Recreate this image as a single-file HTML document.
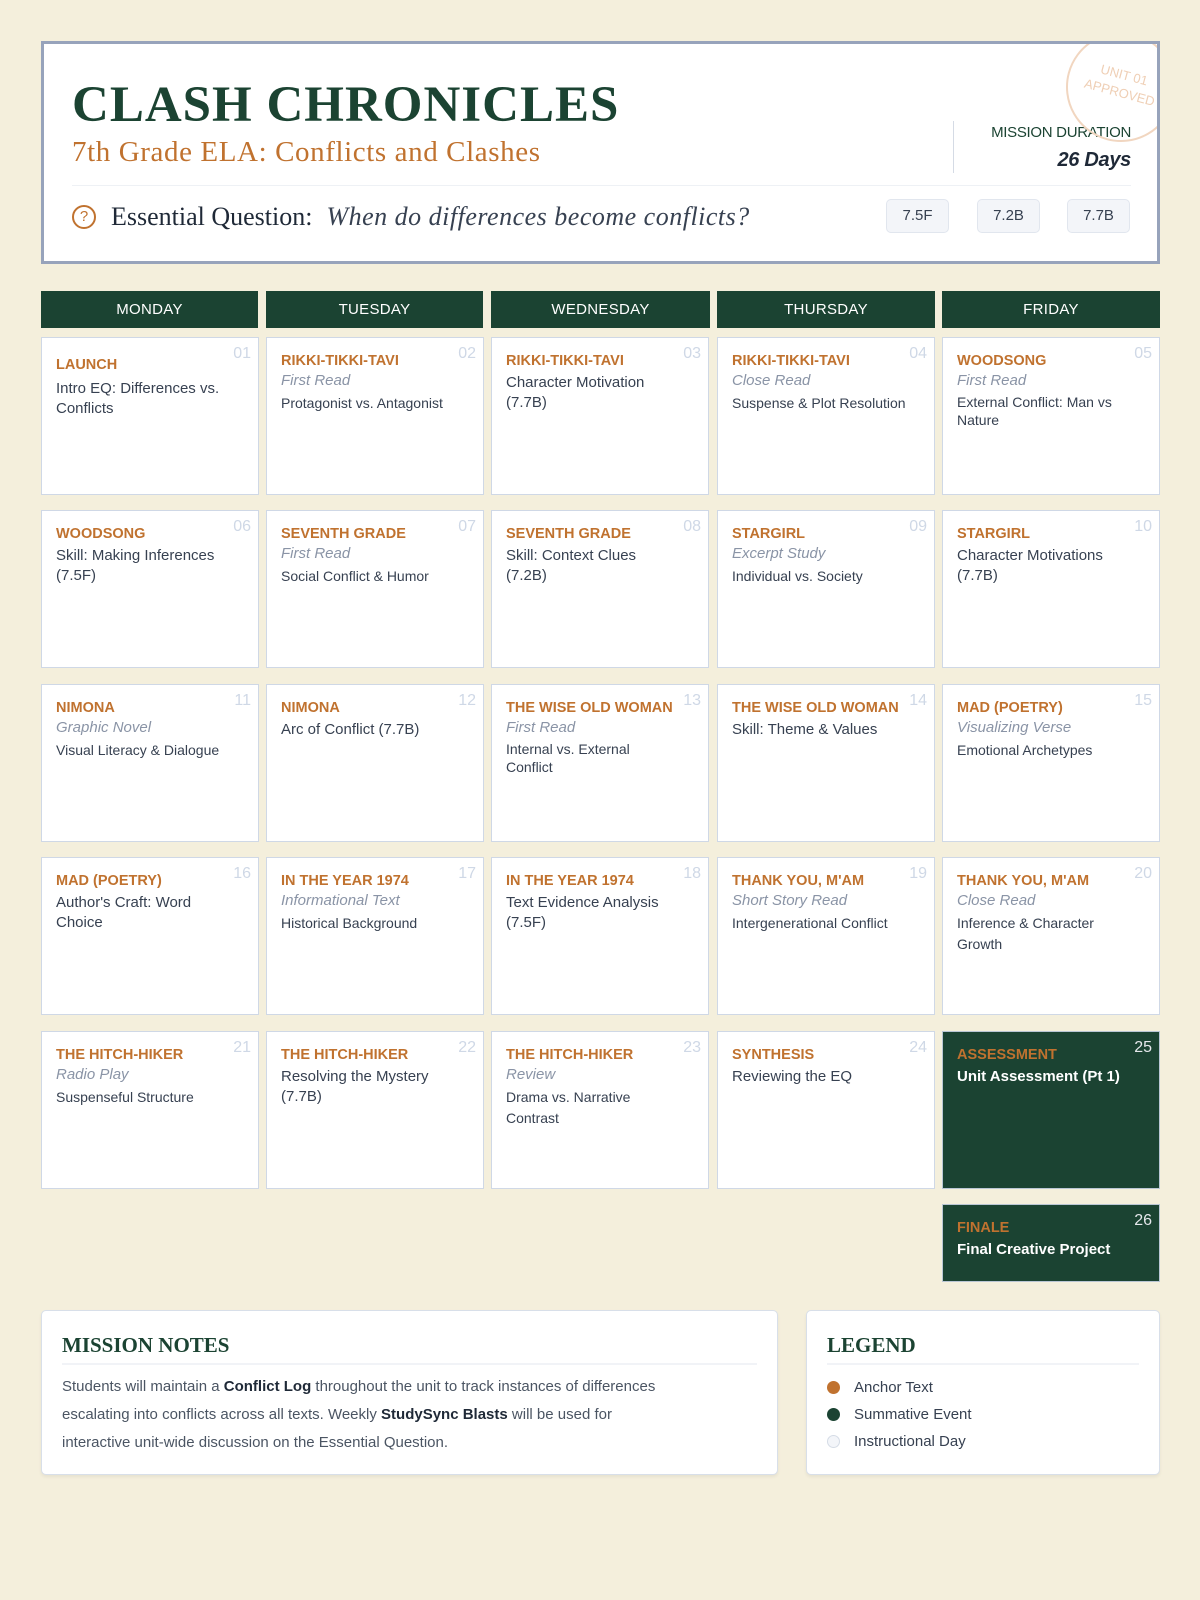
<!DOCTYPE html>
<html><head><meta charset="utf-8"><style>
*{box-sizing:border-box;margin:0;padding:0}
body{width:1200px;height:1600px;background:#f4efdc;font-family:"Liberation Sans",sans-serif;position:relative;overflow:hidden}
.hdr{position:absolute;left:41px;top:41px;width:1119px;height:223px;background:#fff;border:3px solid #97a3bb;overflow:hidden}
.title{position:absolute;left:28px;top:32px;font-family:"Liberation Serif",serif;font-weight:bold;font-size:51px;color:#1b4332;letter-spacing:1px}
.sub{position:absolute;left:28px;top:92px;font-family:"Liberation Serif",serif;font-size:29px;color:#c0722f;letter-spacing:.6px}
.vline{position:absolute;left:909px;top:77px;width:1px;height:52px;background:#d5dbe5}
.md{position:absolute;right:26px;top:80px;text-align:right;color:#1b4332;font-size:15px;letter-spacing:-.3px}
.md b{display:block;font-size:20px;font-style:italic;color:#1f2937;margin-top:8px}
.stamp{position:absolute;left:1022px;top:-12px;width:110px;height:110px;border:2px solid #f1d6c0;border-radius:50%;color:#efcfb5;font-size:13px;text-align:center;transform:rotate(15deg);padding-top:32px;line-height:18px}
.hr{position:absolute;left:28px;right:26px;top:141px;height:1px;background:#eef1f5}
.eq{position:absolute;left:28px;top:158px;font-family:"Liberation Serif",serif;font-size:26px;color:#1f2937;display:flex;align-items:center}
.eq .ic{width:24px;height:24px;border:2px solid #c0722f;border-radius:50%;color:#c0722f;font-size:15px;text-align:center;line-height:20px;margin-right:15px;font-family:"Liberation Sans",sans-serif}
.eq i{color:#374151;margin-left:14px;letter-spacing:.5px}
.tag{position:absolute;top:155px;width:63px;height:34px;background:#f3f5f9;border:1px solid #e1e6ee;border-radius:5px;font-size:15px;color:#374151;text-align:center;line-height:32px}
.day{position:absolute;top:291px;height:37px;background:#1b4332;color:#fff;font-size:15px;text-align:center;line-height:37px;letter-spacing:.3px}
.c{position:absolute;width:218px;height:158px;background:#fff;border:1.5px solid #cfd8e6;padding:12px 14px}
.c .n{position:absolute;right:7px;top:7px;font-size:16px;color:#cfd8e6}
.c .t{font-size:14.5px;font-weight:bold;color:#c0722f;margin-top:3px;white-space:nowrap}
.c .s{font-size:15px;font-style:italic;color:#8a94a6;margin-top:3px}
.c .m{font-size:15px;color:#374151;margin-top:4px;line-height:20px}
.c .d{font-size:14px;color:#374151;margin-top:4px;line-height:21px}
.c.g{background:#1b4332;border-color:#b9c6d4}
.c.g .n{color:#e5e7eb}
.c.g .m{color:#fff;font-weight:bold}
.box{position:absolute;top:1310px;height:165px;background:#fff;border:1.5px solid #d8dfe9;border-radius:5px;box-shadow:0 2px 3px rgba(0,0,0,.06)}
.box h3{font-family:"Liberation Serif",serif;font-size:21px;color:#1b4332;padding-bottom:5px;border-bottom:2px solid #f1f3f7}
.notes{left:41px;width:737px;padding:22px 20px}
.notes p{font-size:15px;color:#4b5563;line-height:28px;margin-top:8px}
.notes b{color:#1f2937}
.leg{left:806px;width:354px;padding:22px 20px}
.li{display:flex;align-items:center;font-size:15px;color:#374151;margin-top:10px}
.li:first-of-type{margin-top:14px}
.dot{width:13px;height:13px;border-radius:50%;margin-right:14px}
</style></head><body>
<div class="hdr">
<div class="title">CLASH CHRONICLES</div>
<div class="sub">7th Grade ELA: Conflicts and Clashes</div>
<div class="vline"></div>
<div class="md">MISSION DURATION<b>26 Days</b></div>
<div class="stamp">UNIT 01<br>APPROVED</div>
<div class="hr"></div>
<div class="eq"><span class="ic">?</span>Essential Question:<i>When do differences become conflicts?</i></div>
<div class="tag" style="left:842px">7.5F</div>
<div class="tag" style="left:933px">7.2B</div>
<div class="tag" style="left:1023px">7.7B</div>
</div>
<div class="day" style="left:41px;width:217px">MONDAY</div>
<div class="day" style="left:266px;width:217px">TUESDAY</div>
<div class="day" style="left:491px;width:219px">WEDNESDAY</div>
<div class="day" style="left:717px;width:218px">THURSDAY</div>
<div class="day" style="left:942px;width:218px">FRIDAY</div>

<div class="c" style="left:41px;top:337px"><span class="n">01</span><div class="t" style="margin-top:7px">LAUNCH</div><div class="m" style="margin-top:6px">Intro EQ: Differences vs.<br>Conflicts</div></div>
<div class="c" style="left:266px;top:337px"><span class="n">02</span><div class="t">RIKKI-TIKKI-TAVI</div><div class="s">First Read</div><div class="d">Protagonist vs. Antagonist</div></div>
<div class="c" style="left:491px;top:337px"><span class="n">03</span><div class="t">RIKKI-TIKKI-TAVI</div><div class="m">Character Motivation<br>(7.7B)</div></div>
<div class="c" style="left:717px;top:337px"><span class="n">04</span><div class="t">RIKKI-TIKKI-TAVI</div><div class="s">Close Read</div><div class="d">Suspense &amp; Plot Resolution</div></div>
<div class="c" style="left:942px;top:337px"><span class="n">05</span><div class="t">WOODSONG</div><div class="s">First Read</div><div class="d" style="line-height:18px">External Conflict: Man vs<br>Nature</div></div>

<div class="c" style="left:41px;top:510px"><span class="n">06</span><div class="t">WOODSONG</div><div class="m">Skill: Making Inferences<br>(7.5F)</div></div>
<div class="c" style="left:266px;top:510px"><span class="n">07</span><div class="t">SEVENTH GRADE</div><div class="s">First Read</div><div class="d">Social Conflict &amp; Humor</div></div>
<div class="c" style="left:491px;top:510px"><span class="n">08</span><div class="t">SEVENTH GRADE</div><div class="m">Skill: Context Clues<br>(7.2B)</div></div>
<div class="c" style="left:717px;top:510px"><span class="n">09</span><div class="t">STARGIRL</div><div class="s">Excerpt Study</div><div class="d">Individual vs. Society</div></div>
<div class="c" style="left:942px;top:510px"><span class="n">10</span><div class="t">STARGIRL</div><div class="m">Character Motivations<br>(7.7B)</div></div>

<div class="c" style="left:41px;top:684px"><span class="n">11</span><div class="t">NIMONA</div><div class="s">Graphic Novel</div><div class="d">Visual Literacy &amp; Dialogue</div></div>
<div class="c" style="left:266px;top:684px"><span class="n">12</span><div class="t">NIMONA</div><div class="m">Arc of Conflict (7.7B)</div></div>
<div class="c" style="left:491px;top:684px"><span class="n">13</span><div class="t">THE WISE OLD WOMAN</div><div class="s">First Read</div><div class="d" style="line-height:18px">Internal vs. External<br>Conflict</div></div>
<div class="c" style="left:717px;top:684px"><span class="n">14</span><div class="t">THE WISE OLD WOMAN</div><div class="m">Skill: Theme &amp; Values</div></div>
<div class="c" style="left:942px;top:684px"><span class="n">15</span><div class="t">MAD (POETRY)</div><div class="s">Visualizing Verse</div><div class="d">Emotional Archetypes</div></div>

<div class="c" style="left:41px;top:857px"><span class="n">16</span><div class="t">MAD (POETRY)</div><div class="m">Author's Craft: Word<br>Choice</div></div>
<div class="c" style="left:266px;top:857px"><span class="n">17</span><div class="t">IN THE YEAR 1974</div><div class="s">Informational Text</div><div class="d">Historical Background</div></div>
<div class="c" style="left:491px;top:857px"><span class="n">18</span><div class="t">IN THE YEAR 1974</div><div class="m">Text Evidence Analysis<br>(7.5F)</div></div>
<div class="c" style="left:717px;top:857px"><span class="n">19</span><div class="t">THANK YOU, M'AM</div><div class="s">Short Story Read</div><div class="d">Intergenerational Conflict</div></div>
<div class="c" style="left:942px;top:857px"><span class="n">20</span><div class="t">THANK YOU, M'AM</div><div class="s">Close Read</div><div class="d">Inference &amp; Character<br>Growth</div></div>

<div class="c" style="left:41px;top:1031px"><span class="n">21</span><div class="t">THE HITCH-HIKER</div><div class="s">Radio Play</div><div class="d">Suspenseful Structure</div></div>
<div class="c" style="left:266px;top:1031px"><span class="n">22</span><div class="t">THE HITCH-HIKER</div><div class="m">Resolving the Mystery<br>(7.7B)</div></div>
<div class="c" style="left:491px;top:1031px"><span class="n">23</span><div class="t">THE HITCH-HIKER</div><div class="s">Review</div><div class="d">Drama vs. Narrative<br>Contrast</div></div>
<div class="c" style="left:717px;top:1031px"><span class="n">24</span><div class="t">SYNTHESIS</div><div class="m">Reviewing the EQ</div></div>
<div class="c g" style="left:942px;top:1031px"><span class="n">25</span><div class="t">ASSESSMENT</div><div class="m">Unit Assessment (Pt 1)</div></div>
<div class="c g" style="left:942px;top:1204px;height:78px"><span class="n">26</span><div class="t">FINALE</div><div class="m">Final Creative Project</div></div>

<div class="box notes"><h3>MISSION NOTES</h3><p>Students will maintain a <b>Conflict Log</b> throughout the unit to track instances of differences<br>escalating into conflicts across all texts. Weekly <b>StudySync Blasts</b> will be used for<br>interactive unit-wide discussion on the Essential Question.</p></div>
<div class="box leg"><h3>LEGEND</h3>
<div class="li"><span class="dot" style="background:#c0722f"></span>Anchor Text</div>
<div class="li"><span class="dot" style="background:#1b4332"></span>Summative Event</div>
<div class="li"><span class="dot" style="background:#f3f5f9;border:1px solid #d5dce6"></span>Instructional Day</div>
</div>
</body></html>
